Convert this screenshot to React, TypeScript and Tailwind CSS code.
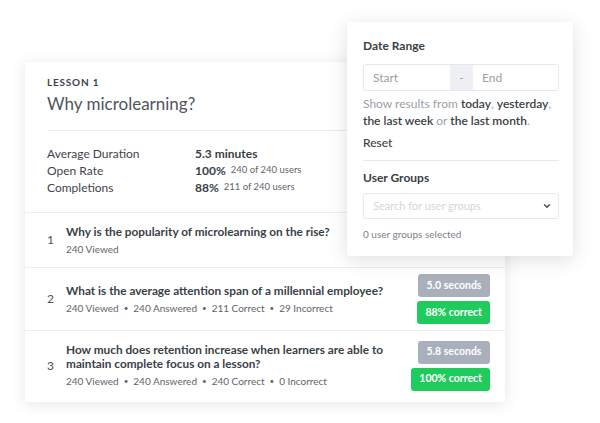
import React from "react";

const stats = [
  { label: "Average Duration", value: "5.3 minutes", note: "" },
  { label: "Open Rate", value: "100%", note: "240 of 240 users" },
  { label: "Completions", value: "88%", note: "211 of 240 users" },
];

type Question = {
  n: number;
  title: string;
  meta: string[];
  time?: string;
  correct?: string;
  h: string;
};

const questions: Question[] = [
  { n: 1, title: "Why is the popularity of microlearning on the rise?", meta: ["240 Viewed"], h: "h-[55px]" },
  {
    n: 2,
    title: "What is the average attention span of a millennial employee?",
    meta: ["240 Viewed", "240 Answered", "211 Correct", "29 Incorrect"],
    time: "5.0 seconds",
    correct: "88% correct",
    h: "h-[63px]",
  },
  {
    n: 3,
    title: "How much does retention increase when learners are able to maintain complete focus on a lesson?",
    meta: ["240 Viewed", "240 Answered", "240 Correct", "0 Incorrect"],
    time: "5.8 seconds",
    correct: "100% correct",
    h: "h-[70px]",
  },
];

const QuestionRow: React.FC<{ q: Question }> = ({ q }) => (
  <div className={`flex items-center border-t border-[#ececef] pl-[22px] pr-[15px] ${q.h}`}>
    <div className="w-[19px] text-[12px] text-[#4b5058]">{q.n}</div>
    <div className="flex-1">
      <div className="max-w-[325px] text-[11.8px] font-bold leading-[14px] text-[#3a3f47]">{q.title}</div>
      <div className="mt-[3px] flex items-center text-[10px] leading-[14px] text-[#5f646c]">
        {q.meta.map((m, i) => (
          <span key={m} className="flex items-center">
            {i > 0 && <span className="mx-[5px] text-[8px]">•</span>}
            {m}
          </span>
        ))}
      </div>
    </div>
    {q.time && (
      <div className="flex flex-col items-end gap-[4px]">
        <div className="flex h-[23px] w-[72px] items-center justify-center rounded-[3px] bg-[#aab0bb] text-[10.5px] font-bold text-white">
          {q.time}
        </div>
        <div className="flex h-[23px] items-center justify-center rounded-[3px] bg-[#1fcb5c] px-[8px] text-[10.5px] font-bold text-white">
          {q.correct}
        </div>
      </div>
    )}
  </div>
);

const FilterPanel: React.FC = () => (
  <div className="absolute left-[347px] top-[22px] h-[234px] w-[226px] rounded-[4px] bg-white px-[16px] shadow-[0_4px_20px_rgba(0,0,0,0.13)]">
    <div className="mt-[16px] text-[12px] font-bold leading-[16px] text-[#3a3f47]">Date Range</div>
    <div className="mt-[10px] flex h-[27px] w-[196px] rounded-[3px] border border-[#e6e8ec] text-[12px]">
      <div className="flex w-[86px] items-center pl-[9px] text-[#9aa0a8]">Start</div>
      <div className="flex w-[23px] items-center justify-center bg-[#eef0f3] text-[#9aa0a8]">-</div>
      <div className="flex flex-1 items-center pl-[9px] text-[#9aa0a8]">End</div>
    </div>
    <div className="mt-[4px] text-[12px] leading-[17px] text-[#9aa0a8]">
      Show results from <span className="font-semibold text-[#3a3f47]">today</span>,{" "}
      <span className="font-semibold text-[#3a3f47]">yesterday</span>,{" "}
      <span className="font-semibold text-[#3a3f47]">the last week</span> or{" "}
      <span className="font-semibold text-[#3a3f47]">the last month</span>.
    </div>
    <div className="mt-[6px] text-[12px] font-medium leading-[16px] text-[#3a3f47]">Reset</div>
    <div className="mt-[9px] h-px w-[196px] bg-[#e8e9ec]" />
    <div className="mt-[9px] text-[12px] font-bold leading-[16px] text-[#3a3f47]">User Groups</div>
    <div className="mt-[7px] flex h-[26px] w-[196px] items-center justify-between rounded-[3px] border border-[#e6e8ec] pl-[9px] pr-[6px]">
      <span className="text-[11px] text-[#d3d6db]">Search for user groups</span>
      <svg width="10" height="10" viewBox="0 0 24 24" fill="none" stroke="#4b5058" strokeWidth="3.5" strokeLinecap="round" strokeLinejoin="round">
        <path d="M6 9l6 6 6-6" />
      </svg>
    </div>
    <div className="mt-[8px] text-[10px] leading-[14px] text-[#7d828a]">0 user groups selected</div>
  </div>
);

export default function App() {
  return (
    <div
      className="relative h-[423px] w-[600px] overflow-hidden bg-white"
      style={{ fontFamily: "Lato, 'Open Sans', sans-serif" }}
    >
      <div className="ml-[25px] mt-[62px] flex h-[340px] w-[480px] flex-col bg-white shadow-[0_2px_14px_rgba(0,0,0,0.10)]">
        <div className="px-[22px] pt-[13px]">
          <div className="text-[10px] font-bold uppercase leading-[14px] tracking-[0.08em] text-[#3f444c]">Lesson 1</div>
          <div className="mt-[3px] text-[17px] leading-[24px] text-[#50555d]">Why microlearning?</div>
          <div className="mt-[14px] h-px bg-[#ececef]" />
          <div className="mt-[14px] pb-[16px]">
            {stats.map((s) => (
              <div key={s.label} className="flex h-[17px] items-center text-[12px] text-[#3f444c]">
                <div className="w-[148px]">{s.label}</div>
                <div className="font-bold text-[#3a3f47]">{s.value}</div>
                {s.note && <div className="ml-[5px] text-[9.5px] text-[#5f646c]">{s.note}</div>}
              </div>
            ))}
          </div>
        </div>
        {questions.map((q) => (
          <QuestionRow key={q.n} q={q} />
        ))}
      </div>
      <FilterPanel />
    </div>
  );
}
